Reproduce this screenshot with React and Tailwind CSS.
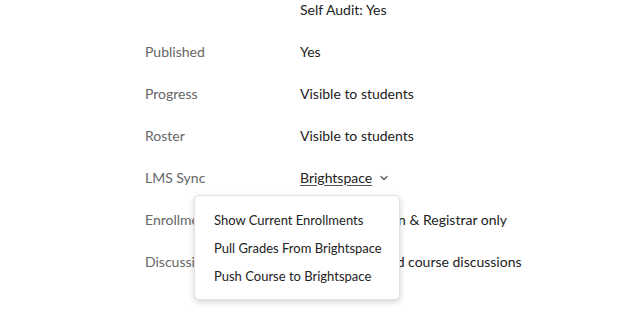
import React from 'react';

const rows = [
  { label: '', value: 'Self Audit: Yes' },
  { label: 'Published', value: 'Yes' },
  { label: 'Progress', value: 'Visible to students' },
  { label: 'Roster', value: 'Visible to students' },
  { label: 'LMS Sync', value: 'Brightspace', menu: true },
  { label: 'Enrollment', value: 'Instructor, Admin & Registrar only' },
  { label: 'Discussions', value: 'Enable all related course discussions' },
];

const menuItems = ['Show Current Enrollments', 'Pull Grades From Brightspace', 'Push Course to Brightspace'];

const App = () => {
  return (
    <div className="w-[625px] h-[334px] overflow-hidden bg-white text-[14px]" style={{ fontFamily: 'Lato, "Open Sans", sans-serif' }}>
      <div className="mt-[-12px] pl-[145px]">
        {rows.map((row, i) => (
          <div key={i} className="flex h-[42px] items-center">
            <div className="w-[155px] text-[#666666]">{row.label}</div>
            {row.menu ? (
              <div className="relative flex items-center text-[#222222]">
                <span className="underline underline-offset-2 decoration-[#555]">{row.value}</span>
                <svg className="ml-[7px] mt-[1px]" width="10" height="10" viewBox="0 0 10 10" fill="none" stroke="#555" strokeWidth="1.2" strokeLinecap="round" strokeLinejoin="round">
                  <path d="M2 3.5 L5 6.5 L8 3.5" />
                </svg>
                <div className="absolute left-[-106px] top-[28px] z-10 w-[206px] rounded-[5px] border border-[#e2e2e2] bg-white pt-[10px] pb-[9px] pl-[19px] shadow-[0_2px_6px_rgba(0,0,0,0.18)]">
                  {menuItems.map((item) => (
                    <div key={item} className="h-[28px] leading-[28px] whitespace-nowrap text-[13px] text-[#222222]">{item}</div>
                  ))}
                </div>
              </div>
            ) : (
              <div className="whitespace-nowrap text-[#222222]">{row.value}</div>
            )}
          </div>
        ))}
      </div>
    </div>
  );
};

export default App;
